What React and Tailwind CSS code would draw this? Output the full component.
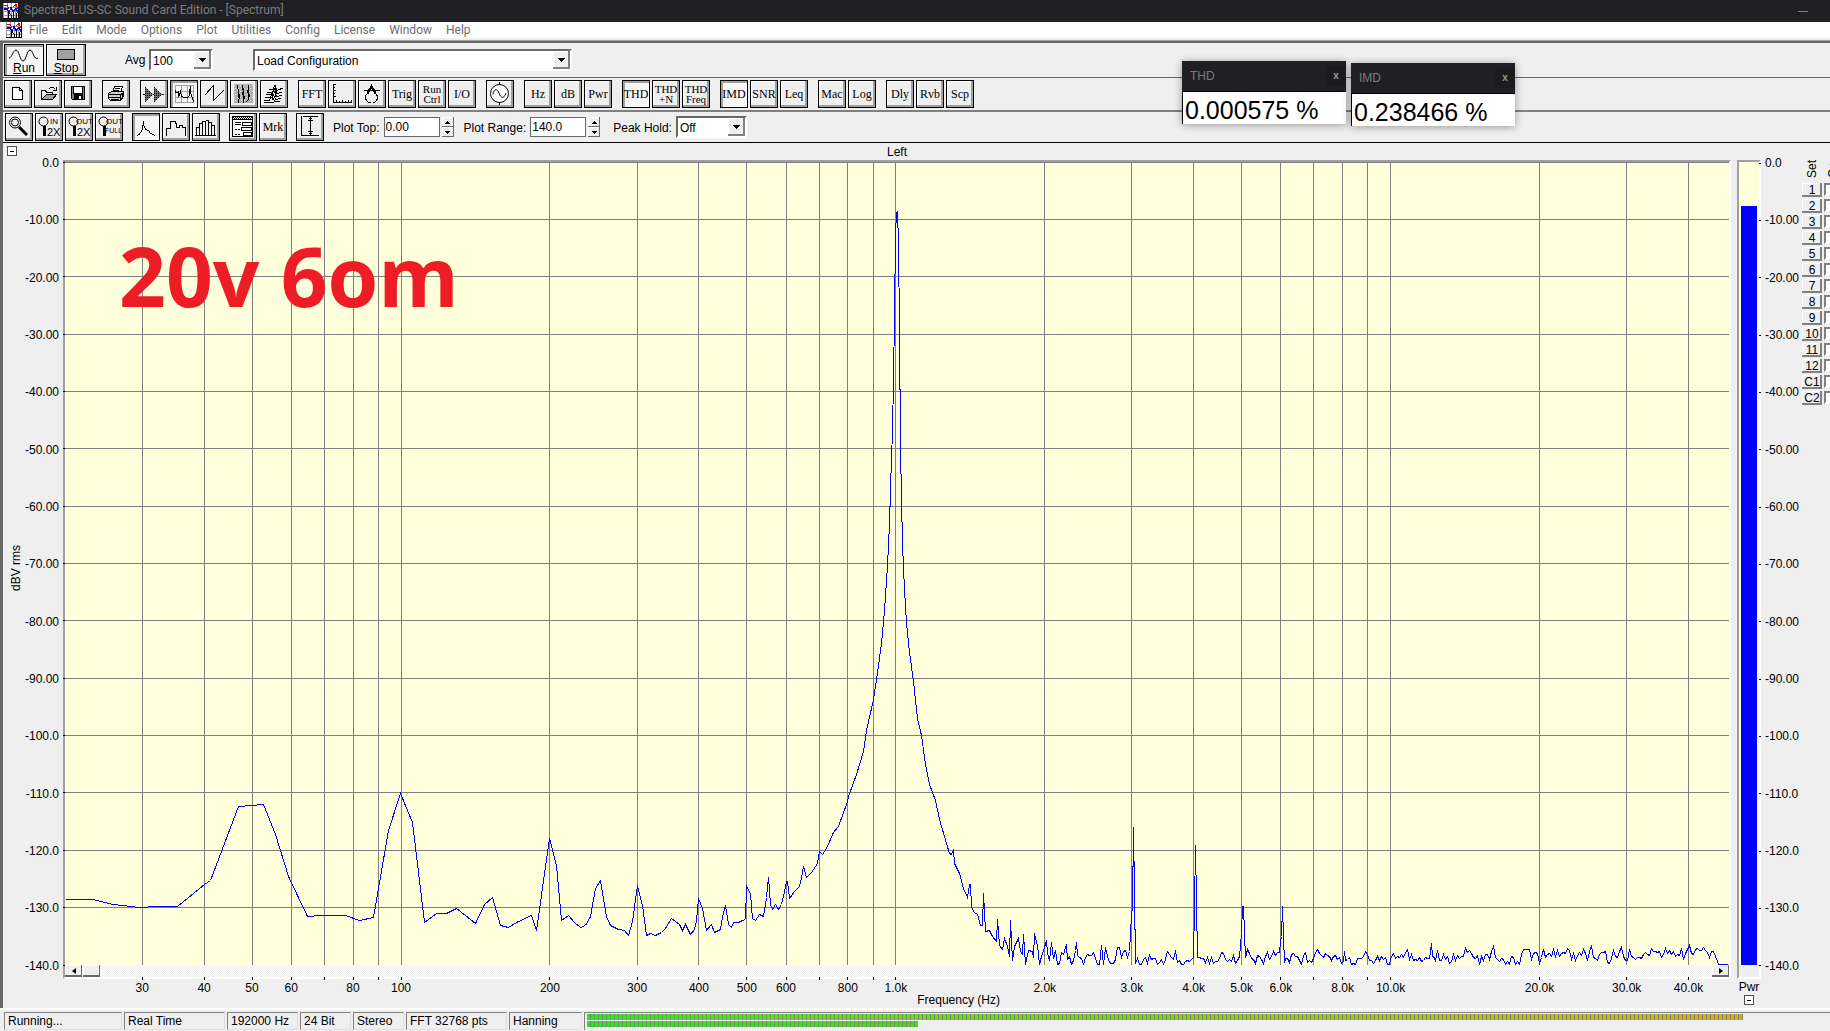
import { Fragment } from "react";

const MENUS = ["File", "Edit", "Mode", "Options", "Plot", "Utilities", "Config", "License", "Window", "Help"];

const DB_LABELS = [
  "0.0", "-10.00", "-20.00", "-30.00", "-40.00", "-50.00", "-60.00", "-70.00",
  "-80.00", "-90.00", "-100.0", "-110.0", "-120.0", "-130.0", "-140.0",
];

const FREQS = [
  [30, "30"], [40, "40"], [50, "50"], [60, "60"], [70, ""], [80, "80"], [90, ""], [100, "100"],
  [200, "200"], [300, "300"], [400, "400"], [500, "500"], [600, "600"], [700, ""], [800, "800"], [900, ""],
  [1000, "1.0k"], [2000, "2.0k"], [3000, "3.0k"], [4000, "4.0k"], [5000, "5.0k"], [6000, "6.0k"], [7000, ""],
  [8000, "8.0k"], [9000, ""], [10000, "10.0k"], [20000, "20.0k"], [30000, "30.0k"], [40000, "40.0k"],
];

const SETS = ["1", "2", "3", "4", "5", "6", "7", "8", "9", "10", "11", "12", "C1", "C2"];

// chart space is 1664 x 803, one decade is 494.8 wide
const freqX = (f) => 336 + 494.8 * Math.log10(f / 100);
const pct = (f) => `${(freqX(f) / 1664) * 100}%`;

const CURVE =
  "0,737 27,737 48,742 74,745 92,744 112,744 139,722 145,718 173,644 198,642 210,672 223,714 242,754 255,753 280,753 294,758 308,755 323,668 335,631 347,660 359,760 371,751 381,751 391,746 400,753 410,761 419,742 427,735 435,763 443,765 451,760 466,753 471,768 484,676 491,703 496,758 503,753 509,760 515,765 520,763 525,754 530,726 535,718 541,754 545,763 553,767 559,768 563,773 567,759 572,723 577,743 581,773 585,771 590,773 596,770 600,766 606,756 614,762 617,768 620,762 625,772 629,767 631,758 633,736 637,746 641,768 646,762 649,770 655,767 657,754 660,743 663,762 666,765 668,760 673,760 677,758 680,757 681,724 685,731 687,756 690,758 694,752 698,754 701,735 703,715 705,742 707,747 710,742 713,747 716,742 718,734 721,719 722,719 724,736 729,729 734,724 736,716 738,704 741,715 746,710 752,701 754,689 757,692 761,686 768,670 773,664 781,642 784,631 791,612 798,589 801,568 808,537 812,510 816,481 819,448 822,403 824,361 825,328 826,295 827,270 828,216 829,154 830,71 831,50 832,49 833,81 834,166 835,286 836,336 837,382 839,427 841,461 844,490 848,519 852,556 856,573 860,602 864,622 870,638 874,657 884,691 886,692 888,687 889,701 894,711 898,726 902,735 904,722 905,722 906,745 909,750 912,752 915,763 917,763 918,731 920,769 924,768 927,774 931,779 932,757 934,783 937,787 939,776 942,784 944,794 945,758 947,798 949,784 953,776 955,789 957,792 958,772 960,802 963,788 967,789 968,795 969,771 972,783 974,802 976,794 978,788 981,778 982,791 984,798 986,780 988,796 989,792";

const SPIKES = {
  1001: 783, 1011: 780, 1012: 793, 1036: 783, 1040: 785, 1066: 753, 1067: 745, 1068: 665, 1069: 732, 1070: 801,
  1128: 795, 1129: 745, 1130: 683, 1131: 741, 1132: 795, 1176: 771, 1177: 744, 1178: 744, 1179: 771, 1180: 795,
  1215: 780, 1216: 774, 1217: 744, 1218: 774, 1219: 800, 1279: 789, 1366: 781, 1367: 794, 1488: 787, 1504: 788,
};

function noiseFloor() {
  let seed = 41;
  const rand = () => {
    seed = (seed * 16807) % 2147483647;
    return seed / 2147483647;
  };
  const pts = [];
  let prev = 0;
  for (let x = 990; x < 1650; x += 1) {
    const r = rand() + rand() - 1;
    if (SPIKES[x]) {
      pts.push(`${x},${SPIKES[x]}`);
      continue;
    }
    if (x % 2) continue;
    prev = prev * 0.25 + r * (x < 1060 ? 14 : 10);
    const base = 796 - Math.max(0, x - 1350) * 0.018;
    pts.push(`${x},${Math.min(802, Math.round(base + prev))}`);
  }
  return `${pts.join(" ")} 1652,799 1653,802 1662,802`;
}

const TRACE = `${CURVE} ${noiseFloor()}`;

function Icon({ children }) {
  return (
    <svg viewBox="1 1 26 26" className="h-[26px] w-[26px] shrink-0" fill="none" stroke="#000" shapeRendering="crispEdges" aria-hidden="true">
      {children}
    </svg>
  );
}

function Lens({ word, sub }) {
  return (
    <Icon>
      <g shapeRendering="auto">
        <circle cx="8.5" cy="8.5" r="4.5" />
        <path d="M9.5 13V23" strokeWidth="3" />
        <text x={word === "IN" ? 15 : 11} y="11" fontSize="8" fill="#000" stroke="none">{word}</text>
        <text x={sub === "2X" ? 12 : 10} y={sub === "2X" ? 23 : 20} fontSize={sub === "2X" ? 11 : 7} fill="#000" stroke="none">{sub}</text>
      </g>
    </Icon>
  );
}

const ICONS = {
  New: <Icon><path fill="#fff" d="M8.5 7.5H15.5L18.5 10.5V19.5H8.5Z" /><path d="M15.5 7.5V10.5H18.5" /></Icon>,
  Open: (
    <Icon>
      <path d="M7.5 19.5V10.5H11.5L12.5 12.5H18.5V14.5" />
      <path fill="#a0a0a0" d="M7.5 19.5L12.5 14.5H22.5L18.5 19.5Z" />
      <path d="M14.5 9.5L16.5 7.5H19.5L21.5 9.5M22.5 7V10.5H19" />
    </Icon>
  ),
  Save: (
    <Icon>
      <path fill="#808080" d="M7.5 6.5H20.5V19.5H8.5L7.5 18.5Z" />
      <path fill="#fff" stroke="none" d="M10 7H18V13H10Z" />
      <path fill="#000" stroke="none" d="M10 14H19V20H10Z" />
      <path stroke="#fff" strokeWidth="2" d="M16 16V19" />
      <path d="M9.5 7V13.5H18.5V7" />
    </Icon>
  ),
  Print: (
    <Icon>
      <path fill="#fff" d="M10.5 12.5L12.5 6.5H20.5L18.5 12.5" />
      <path d="M13 8.5H18M12 10.5H17" />
      <path fill="#d0d0d0" d="M6.5 13.5L9.5 11.5H21.5V16.5L18.5 20.5H8.5L6.5 18.5Z" />
      <path d="M7 14.5H18.5V20M7 17.5H18M19 14.5L22 12M9 19.5H17M20.5 13V18" />
    </Icon>
  ),
  "Time Series": (
    <Icon>
      <path d="M3 14.5H24" />
      <path fill="#707070" stroke="none" d="M5 7L13 14.500L5 22ZM14 7L22 14.500L14 22Z" />
      <path strokeDasharray="1 1" d="M5.500 7V22M7.500 9V20M9.500 11V18M11.500 13V16M14.500 7V22M16.500 9V20M18.500 11V18M20.500 13V16" />
    </Icon>
  ),
  Spectrum: (
    <Icon>
      <path stroke="#a0a0a0" d="M5.5 5V23M11.5 5V23M17.5 5V23M23.5 5V23M5 5.5H24M5 11.5H24M5 17.5H24M5 22.5H24" />
      <path d="M5.500 10V12L8.500 12.500V17L10.500 11.500L11.500 16.500L14.500 17.500H17.500L19.500 15.500L20.500 6V13L22.500 18.500L23.500 22M8.500 11V16M19.500 9V15" />
    </Icon>
  ),
  Phase: <Icon><path d="M4.500 15.500L13.500 5.500V20.500L23.500 10.500" /></Icon>,
  Spectrogram: (
    <Icon>
      <path fill="#b0b0b0" stroke="none" d="M4 4H23V23H4Z" />
      <path stroke="#e8e8e8" strokeDasharray="1 2" d="M4 5.500H23M5 8.500H23M4 11.500H23M5 14.500H23M4 17.500H23M5 20.500H23" />
      <path d="M7.500 5V8L8.500 10V13L9.500 15V18L8.500 20V23M12.500 5V8L13.500 11L12.500 14L14.500 17L13.500 20V23M18.500 5V9L17.500 12L19.500 15L18.500 19L16.500 22M8.500 11V18M13.500 8V18M18.500 8V17" />
    </Icon>
  ),
  Surface: (
    <Icon>
      <path d="M9 9.500H13L15 5L17 10.500L23 8M7 12.500H12L15 8L17 13.500L22 12M6 14.500H11L14 11L17 16.500L22 15M5 17.500H10L13 14L16 19.500L21 18M4 20.500H9L12 17L15 21.500L20 21M4 22.500H14M15.500 6V17M12.500 11V20" />
    </Icon>
  ),
  Scaling: (
    <Icon>
      <path d="M5.500 4V23M5 22.500H24M5 4.500H8M5 7.500H7M5 10.500H8M5 13.500H7M5 16.500H8M8.500 20V22M11.500 21V22M14.500 20V22M17.500 21V22M20.500 20V22M23.500 20V22" />
    </Icon>
  ),
  Calibrate: (
    <Icon>
      <path d="M13.500 4V9M6 10.500H22M13.500 8L7.500 16V19L10.500 22.500H12.500M13.500 8L19.500 16V19L16.500 22.500H14.500" />
      <path d="M11.500 9.500L13.500 6.500L15.500 9.500L17.500 13.500M11.500 9.500L9.500 13.500" strokeWidth="2" />
    </Icon>
  ),
  Generator: (
    <Icon>
      <g shapeRendering="auto">
        <circle cx="13.500" cy="13.500" r="9" fill="#fff" />
        <path d="M13.500 2V5M13.500 22V25M7 14.500C7.500 9 11.500 8 13 13S18 19.500 20 13" />
      </g>
    </Icon>
  ),
  Zoom: (
    <Icon>
      <g shapeRendering="auto">
        <circle cx="10" cy="9.500" r="5.500" />
        <circle cx="10" cy="9.500" r="3.500" />
        <path strokeWidth="3" d="M14 14L22 22" />
      </g>
    </Icon>
  ),
  "Zoom In": <Lens word="IN" sub="2X" />,
  "Zoom Out": <Lens word="OUT" sub="2X" />,
  "Zoom Full": <Lens word="OUT" sub="FULL" />,
  Line: <Icon><path d="M5 22.500L8.500 20.500L10.500 15.500L11.500 8V12L13.500 16.500L16.500 17.500L18.500 20.500L23.500 22.500" /></Icon>,
  Step: <Icon><path d="M4.500 23V15.500H8.500V8.500H13.500V10.500H14.500V14.500H17.500V12.500H20.500V14.500H23.500V23" /></Icon>,
  Bars: (
    <Icon>
      <path d="M4.500 23V14.500H7.500V23M7.500 14V10.500H10.500V23M10.500 10V8.500H13.500V23M13.500 7.500H16.500V23M16.500 9.500H19.500V23M19.500 12.500H22.500V23M3 22.500H24" />
    </Icon>
  ),
  Form: (
    <Icon>
      <path fill="#fff" d="M3.500 3.500H23.500V23.500H3.500Z" />
      <path strokeDasharray="1 1" d="M4 4.500H23M5 5.500H23" />
      <path d="M4 6.500H23M6 9.500H12M6 11.500H12M13.500 9.500H22.500V12.500H13.500ZM12.500 14.500H22.500V17.500H12.500ZM14.500 19.500H22.500V22.500H14.500Z" />
      <path strokeDasharray="2 1" d="M6 16.500H11M6 21.500H12" />
    </Icon>
  ),
  Autoscale: (
    <Icon>
      <path d="M5.500 3V22.500H23M7 3.500H22M14.500 4V22M12 7.500H17M13 5.500H16M12 18.500H17M13 20.500H16M10 22.500H20" />
    </Icon>
  ),
};

const TOOL_ROW = [
  ["New", "Open", "Save"],
  ["Print"],
  ["Time Series", "Spectrum", "Phase", "Spectrogram", "Surface"],
  ["FFT", "Scaling", "Calibrate", "Trig", "Run Ctrl", "I/O"],
  ["Generator"],
  ["Hz", "dB", "Pwr"],
  ["THD", "THD +N", "THD Freq"],
  ["IMD", "SNR", "Leq"],
  ["Mac", "Log"],
  ["Dly", "Rvb", "Scp"],
];

const PLOT_ROW = [["Zoom", "Zoom In", "Zoom Out", "Zoom Full"], ["Line", "Step", "Bars"], ["Form", "Mrk"], ["Autoscale"]];

const PRESSED = ["Spectrum", "THD", "IMD", "Line"];

const RAISED = "border border-black bg-[#efefef] shadow-[inset_-2px_-2px_#a0a0a0,inset_1px_1px_#fff]";
const SUNKEN = "border border-black bg-[#f6f6f6] shadow-[inset_2px_2px_#a0a0a0,inset_-1px_-1px_#fff]";

function ToolButton({ name }) {
  const words = name.split(" ");
  return (
    <button
      type="button"
      aria-label={name}
      aria-pressed={PRESSED.includes(name)}
      className={`flex h-7 w-7 shrink-0 flex-col items-center justify-center overflow-hidden ${PRESSED.includes(name) ? SUNKEN : RAISED}`}
    >
      {ICONS[name] ||
        words.map((w) => (
          <span
            key={w}
            className={`font-['Liberation_Serif',serif] whitespace-nowrap ${words.length > 1 ? "text-[11px] leading-[10px]" : "text-xs"}`}
          >
            {w}
          </span>
        ))}
    </button>
  );
}

function ToolGroups({ groups }) {
  return groups.map((group) => (
    <div key={group[0]} className="flex gap-[2px]">
      {group.map((name) => (
        <ToolButton key={name} name={name} />
      ))}
    </div>
  ));
}

function Combo({ id, value, className }) {
  return (
    <div className={`relative h-[22px] shrink-0 ${className}`}>
      <select
        id={id}
        aria-label={id}
        defaultValue={value}
        className="h-full w-full appearance-none border-2 border-t-[#696969] border-r-white border-b-white border-l-[#696969] bg-white pt-px pl-[2px] text-xs leading-4"
      >
        <option>{value}</option>
      </select>
      <span className="pointer-events-none absolute top-[2px] right-[2px] bottom-[2px] flex w-[17px] items-center justify-center bg-[#efefef] shadow-[inset_-2px_-2px_#808080,inset_1px_1px_#fff]">
        <svg viewBox="0 0 7 4" className="h-1 w-[7px]" shapeRendering="crispEdges">
          <path d="M0 0H7L3.500 4Z" />
        </svg>
      </span>
    </div>
  );
}

function Spin({ label, value }) {
  return (
    <div className="flex items-center">
      <label className="mr-1 pt-[2px] whitespace-nowrap" htmlFor={label}>{label}:</label>
      <input id={label} type="text" defaultValue={value} className="h-5 w-14 border border-[#696969] bg-white px-[1px] text-xs" />
      <div className="ml-[2px] flex flex-col">
        {["M0 3H5L2.500 0Z", "M0 0H5L2.500 3Z"].map((d, i) => (
          <button
            key={d}
            type="button"
            aria-label={`${label} ${i ? "down" : "up"}`}
            className="flex h-[10px] w-3 items-center justify-center bg-[#efefef] shadow-[inset_-1px_-1px_#696969,inset_1px_1px_#fff]"
          >
            <svg viewBox="0 0 5 3" className="h-[3px] w-[5px]" shapeRendering="crispEdges"><path d={d} /></svg>
          </button>
        ))}
      </div>
    </div>
  );
}

function AppIcon() {
  return (
    <svg viewBox="0 0 16 16" className="h-4 w-4 shrink-0" fill="none" shapeRendering="crispEdges" aria-hidden="true">
      <path fill="#fff" d="M0 0H16V16H0Z" />
      <path stroke="#999" d="M.5 0V16M4.500 0V16M8.500 0V16M12.500 0V16M0 4.500H16M0 8.500H16M0 12.500H16" />
      <path stroke="#e00000" d="M1 2.500H4L6 6M10 4L13 1.500L15 6M12 2.500H14" />
      <path stroke="#0000e0" d="M1 5.500H4L6 9.500L8 4.500L10 8.500L13 5.500L15 9.500M1 6.500H4M12 6.500H14" />
      <path stroke="#000" d="M5.500 15V10L8 12V15M10.500 9V15M13.500 10V15M0 15.500H16M15.500 0V16" />
    </svg>
  );
}

function MinusBox({ label }) {
  return (
    <button type="button" aria-label={label} className="flex h-[10px] w-[10px] shrink-0 items-center justify-center border border-[#505050] bg-white">
      <span className="h-px w-1 bg-black" />
    </button>
  );
}

function Readout({ title, value, className }) {
  return (
    <section className={`absolute w-[164px] shadow-[0_1px_8px_#00000060] ${className}`}>
      <header className="flex h-[30px] items-center justify-between bg-[#202024] pl-2 text-xs text-[#7c7c7c]">
        <span>{title}</span>
        <button type="button" aria-label={`Close ${title}`} className="h-5 w-5 bg-[#1c1c20] text-[10px] leading-5 font-bold text-[#999]">x</button>
      </header>
      <div className="h-[33px] border-t border-l border-black bg-white pt-1 pl-[2px] text-[25px] leading-7 whitespace-nowrap">{value}</div>
    </section>
  );
}

function Chart() {
  return (
    <svg className="block h-full w-full overflow-visible" shapeRendering="crispEdges" role="img" aria-label="Left channel spectrum">
      <g stroke="#808080">
        {FREQS.map(([f]) => (
          <line key={f} x1={pct(f)} x2={pct(f)} y1="0" y2="100%" />
        ))}
        {DB_LABELS.slice(0, 14).map((l, i) => (
          <line key={l} x1="0" x2="100%" y1={`${(i / 14) * 100}%`} y2={`${(i / 14) * 100}%`} />
        ))}
      </g>
      <g stroke="#000">
        {DB_LABELS.map((l, i) => (
          <line key={l} x1="-2" x2="0" y1={`${(i / 14) * 100}%`} y2={`${(i / 14) * 100}%`} />
        ))}
      </g>
      <svg viewBox="-0.5 -0.5 1664 803" width="100%" height="100%" preserveAspectRatio="none">
        <polyline points={TRACE} fill="none" stroke="#0000ff" vectorEffect="non-scaling-stroke" />
      </svg>
    </svg>
  );
}

function FreqAxis() {
  return (
    <svg className="-mt-[2px] ml-[2px] block h-[31px] w-[calc(100%-4px)] shrink-0 overflow-visible text-xs" aria-hidden="true">
      {FREQS.map(([f, label]) => (
        <Fragment key={f}>
          <line x1={pct(f)} x2={pct(f)} y1="0" y2="3" stroke="#000" shapeRendering="crispEdges" />
          <text x={pct(f)} y="15" textAnchor="middle">{label}</text>
        </Fragment>
      ))}
      <text x="53.7%" y="27" textAnchor="middle">Frequency (Hz)</text>
    </svg>
  );
}

const SCROLL_BTN = "flex h-3 w-[17px] items-center justify-center bg-[#efefef] shadow-[inset_-1px_-2px_#696969,inset_1px_1px_#fff]";

function ScrollBar() {
  return (
    <div className="flex h-3 shrink-0 bg-[conic-gradient(#fff_25%,#ececec_0_50%,#fff_0_75%,#ececec_0)] bg-[length:2px_2px]">
      <button type="button" aria-label="Scroll left" className={SCROLL_BTN}>
        <svg viewBox="0 0 4 6" className="h-[6px] w-1"><path d="M4 0V6L0 3Z" /></svg>
      </button>
      <button type="button" aria-label="Scroll thumb" className={`ml-px ${SCROLL_BTN}`} />
      <button type="button" aria-label="Scroll right" className={`ml-auto ${SCROLL_BTN}`}>
        <svg viewBox="0 0 4 6" className="h-[6px] w-1"><path d="M0 0V6L4 3Z" /></svg>
      </button>
    </div>
  );
}

function StatusCell({ children, className }) {
  return (
    <div className={`h-[18px] shrink-0 border border-t-[#808080] border-r-[#e0e0e0] border-b-[#e0e0e0] border-l-[#808080] pl-[3px] leading-4 whitespace-nowrap ${className}`}>
      {children}
    </div>
  );
}

const SEGMENTS = "h-[6px] bg-[repeating-linear-gradient(90deg,transparent_0_3px,#808080_3px_4px)]";

export default function App() {
  return (
    <div className="relative flex h-screen w-full flex-col overflow-hidden bg-[#efefef] font-['Liberation_Sans',Arial,sans-serif] text-xs leading-[14px] text-black">
      {/* title bar */}
      <header className="flex h-[22px] shrink-0 items-center gap-[5px] bg-[#202024] pl-[3px] font-['Roboto',sans-serif] text-xs text-[#7c7c7c]">
        <AppIcon />
        <h1 className="pb-[2px] whitespace-nowrap">SpectraPLUS-SC Sound Card Edition - [Spectrum]</h1>
        <button type="button" aria-label="Minimize" className="mr-[22px] ml-auto h-px w-[10px] bg-[#7c7c7c]" />
      </header>

      {/* menu */}
      <nav className="flex h-[18px] shrink-0 items-center border-b-2 border-[#efefef] bg-white pl-[6px] font-['Roboto',sans-serif] text-xs text-[#6d6d6d]">
        <AppIcon />
        <div className="ml-[7px] flex gap-[14px]">
          {MENUS.map((m) => (
            <a key={m} href={`#${m}`}>{m}</a>
          ))}
        </div>
      </nav>

      <div className="h-px shrink-0 bg-[#a0a0a0]" />
      <div className="flex min-h-0 flex-1 flex-col border-t-2 border-l-[3px] border-[#696969]">
        {/* run bar */}
        <div className="flex h-[35px] shrink-0 items-center border-b border-[#696969] pl-px">
          <button type="button" className={`flex h-8 w-10 flex-col items-center justify-between pt-1 pb-px text-xs leading-3 ${SUNKEN}`}>
            <svg viewBox="0 0 30 13" className="h-[13px] w-[30px] shrink-0" fill="none" stroke="#000">
              <path d="M0 9C3 9 4 1 7 1S11 12 14 12S18 1 21 1S25 12 29 9" />
            </svg>
            <span><u>R</u>un</span>
          </button>
          <button type="button" className={`ml-[2px] flex h-8 w-10 flex-col items-center justify-between pt-1 pb-px text-xs leading-3 ${RAISED}`}>
            <span className="h-[11px] w-[18px] border border-black bg-[#a0a0a0]" />
            <span><u>S</u>top</span>
          </button>
          <label htmlFor="Average" className="ml-[39px] w-6">Avg</label>
          <Combo id="Average" value="100" className="w-16" />
          <Combo id="Configuration" value="Load Configuration" className="ml-10 w-[319px]" />
        </div>

        {/* analysis tools */}
        <div className="flex h-[34px] shrink-0 items-center gap-[10px] border-b-2 border-[#808080] pl-px">
          <ToolGroups groups={TOOL_ROW} />
        </div>

        {/* plot tools */}
        <div className="flex h-[31px] shrink-0 items-center border-b border-black pl-[2px]">
          <div className="flex gap-[9px]">
            <ToolGroups groups={PLOT_ROW} />
          </div>
          <div className="ml-[9px] flex items-center gap-[10px]">
            <Spin label="Plot Top" value="0.00" />
            <Spin label="Plot Range" value="140.0" />
            <div className="ml-[3px] flex items-center gap-1">
              <label htmlFor="Hold" className="pt-[2px] whitespace-nowrap">Peak Hold:</label>
              <Combo id="Hold" value="Off" className="w-[71px]" />
            </div>
          </div>
        </div>

        <main className="flex min-h-0 flex-1">
          {/* level axis */}
          <div className="flex w-[60px] shrink-0 flex-col">
            <div className="h-[13px] pt-[3px] pl-1"><MinusBox label="Collapse plot" /></div>
            <div className="mb-[35px] flex flex-1 items-stretch justify-between pr-1 pl-[6px]">
              <span className="rotate-180 self-center pb-[8px] whitespace-nowrap [writing-mode:vertical-rl]">dBV rms</span>
              <div className="flex flex-col justify-between text-right">
                {DB_LABELS.map((l) => <span key={l}>{l}</span>)}
              </div>
            </div>
          </div>

          {/* spectrum plot */}
          <div className="flex min-w-0 flex-1 flex-col">
            <h2 className="h-[17px] shrink-0 pt-[2px] text-center">Left</h2>
            <div className="flex min-h-0 flex-1 flex-col border-2 border-t-[#a0a0a0] border-r-white border-b-white border-l-[#a0a0a0]">
              <div className="relative min-h-0 flex-1 bg-[#ffffdc]">
                <Chart />
                <p className="absolute top-[61px] left-[54px] font-['Open_Sans',sans-serif] text-[82px] leading-[104px] font-bold whitespace-nowrap text-[#ee1c24]">
                  20v 6om
                </p>
              </div>
              <ScrollBar />
            </div>
            <FreqAxis />
          </div>

          {/* power meter */}
          <div className="ml-[6px] flex w-6 shrink-0 flex-col items-center pt-[17px]">
            <div className="flex w-full flex-1 flex-col border-2 border-t-[#a0a0a0] border-r-white border-b-white border-l-[#a0a0a0]">
              <div className="flex-1 bg-[#ffffdc] px-[2px] pt-11">
                <div className="h-full bg-[#0000ff]" />
              </div>
              <div className="h-3" />
            </div>
            <span className="mt-px">Pwr</span>
            <div className="mt-px mb-[3px]"><MinusBox label="Collapse meter" /></div>
          </div>
          <div className="z-10 mt-[13px] mb-[35px] -ml-[2px] flex w-[43px] shrink-0 flex-col justify-between">
            {DB_LABELS.map((l) => (
              <span key={l} className="flex items-center gap-1 whitespace-nowrap">
                <i className="h-px w-[2px] bg-black" />
                {l}
              </span>
            ))}
          </div>

          {/* overlay sets */}
          <table className="h-fit shrink-0 border-separate border-spacing-0">
            <thead>
              <tr>
                <th className="h-10 w-5 p-0 pb-[2px] align-bottom font-normal"><span className="inline-block rotate-180 [writing-mode:vertical-rl]">Set</span></th>
                <th className="w-2 max-w-2 p-0 pb-[2px] pl-1 align-bottom font-normal"><span className="inline-block rotate-180 [writing-mode:vertical-rl]">On</span></th>
              </tr>
            </thead>
            <tbody>
              {SETS.map((s) => (
                <tr key={s} className="h-4">
                  <td className="p-0 align-top">
                    <button type="button" className="block h-[14px] w-5 bg-[#efefef] text-xs leading-[14px] shadow-[inset_-2px_-2px_#808080,inset_1px_1px_#fff]">{s}</button>
                  </td>
                  <td className="max-w-2 p-0 pl-[2px] align-top">
                    <input type="checkbox" aria-label={`Overlay ${s}`} className="block h-[13px] w-[13px] appearance-none border-2 border-t-[#808080] border-r-white border-b-white border-l-[#808080] bg-white" />
                  </td>
                </tr>
              ))}
            </tbody>
          </table>
        </main>
      </div>

      {/* status bar */}
      <footer className="flex h-[23px] shrink-0 items-center gap-[2px] border-t-2 border-white pt-px pl-1">
        <StatusCell className="w-[118px]">Running...</StatusCell>
        <StatusCell className="w-[101px]">Real Time</StatusCell>
        <StatusCell className="w-[71px]">192000 Hz</StatusCell>
        <StatusCell className="w-[51px]">24 Bit</StatusCell>
        <StatusCell className="w-[51px]">Stereo</StatusCell>
        <StatusCell className="w-[101px]">FFT 32768 pts</StatusCell>
        <StatusCell className="w-[73px]">Hanning</StatusCell>
        <div className="flex h-[18px] flex-1 flex-col gap-px border-t border-l border-[#808080] pt-px pl-[2px]">
          <div className="w-[93%] bg-linear-to-r from-[#00ff00] via-[#78d800] to-[#dcb000]"><div className={SEGMENTS} /></div>
          <div className="w-[26.6%] bg-linear-to-r from-[#00ff00] to-[#40e400]"><div className={SEGMENTS} /></div>
        </div>
      </footer>

      {/* floating readouts */}
      <Readout title="THD" value="0.000575 %" className="top-[61px] right-[484px]" />
      <Readout title="IMD" value="0.238466 %" className="top-[63px] right-[315px]" />
    </div>
  );
}
